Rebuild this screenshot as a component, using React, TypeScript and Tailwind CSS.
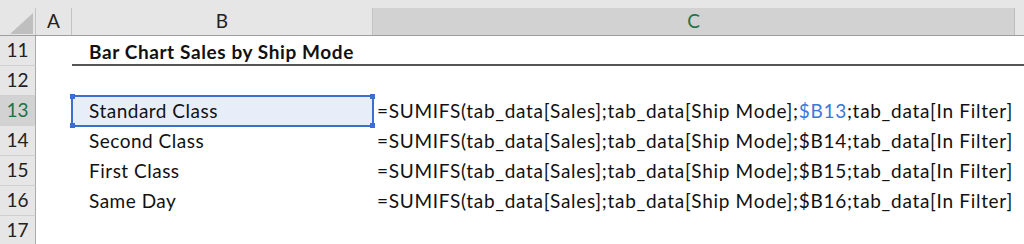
import React from 'react';

const ROWS = [
  { n: 11, b: 'Bar Chart Sales by Ship Mode', title: true },
  { n: 12, b: '' },
  { n: 13, b: 'Standard Class', ref: '$B13', active: true },
  { n: 14, b: 'Second Class', ref: '$B14' },
  { n: 15, b: 'First Class', ref: '$B15' },
  { n: 16, b: 'Same Day', ref: '$B16' },
  { n: 17, b: '' },
];

function Handle({ className }: { className: string }) {
  return <span className={`absolute w-[5px] h-[5px] bg-[#3a6fd2] ${className}`} />;
}

export default function App() {
  return (
    <div
      className="w-[1024px] h-[244px] overflow-hidden bg-white flex flex-col text-[19px] text-[#111]"
      style={{ fontFamily: 'Lato, "Open Sans", sans-serif' }}
    >
      {/* column headers */}
      <div className="flex items-end h-[36px] shrink-0 bg-[#e6e6e6] border-b border-[#9e9e9e]">
        <div className="w-[36px] h-[27px] shrink-0 border-r border-[#c4c4c4] flex items-end justify-end pr-[2px] pb-[1px]">
          <svg width="23" height="21" viewBox="0 0 23 21">
            <path d="M0 21 L23 0 L23 21 Z" fill="#bfbfbf" />
          </svg>
        </div>
        <div className="w-[36px] h-[27px] shrink-0 border-r border-[#c4c4c4] flex items-center justify-center text-[#222]">A</div>
        <div className="w-[301px] h-[27px] shrink-0 border-r border-[#c4c4c4] flex items-center justify-center text-[#222]">B</div>
        <div className="w-[642px] h-[27px] shrink-0 border-r border-[#bdbdbd] bg-[#d2d2d2] flex items-center justify-center text-[#217346]">C</div>
        <div className="flex-1 h-[27px]" />
      </div>

      {ROWS.map((r) => (
        <div key={r.n} className="flex h-[30px] shrink-0">
          <div
            className={`w-[36px] shrink-0 border-r border-b border-r-[#ababab] border-b-[#d0d0d0] flex items-center justify-center ${
              r.active ? 'bg-[#d2d2d2] text-[#217346]' : 'bg-[#e6e6e6] text-[#222]'
            }`}
          >
            {r.n}
          </div>
          <div className="w-[36px] shrink-0" />
          {r.title ? (
            <div className="flex-1 flex items-center pl-[17px] pt-[4px] font-bold tracking-[0.6px] border-b-2 border-[#555]">
              {r.b}
            </div>
          ) : (
            <>
              <div className="relative w-[301px] shrink-0 flex items-center pl-[17px] tracking-[0.5px]">
                {r.active && (
                  <div className="absolute -left-[1px] -top-[1px] -right-[1px] -bottom-[1px] border-2 border-[#3a6fd2] bg-[#e8eef9]">
                    <Handle className="-left-[3px] -top-[3px]" />
                    <Handle className="-right-[3px] -top-[3px]" />
                    <Handle className="-left-[3px] -bottom-[3px]" />
                    <Handle className="-right-[3px] -bottom-[3px]" />
                  </div>
                )}
                <span className="relative">{r.b}</span>
              </div>
              <div className="flex-1 flex items-center pl-[4px] whitespace-nowrap tracking-[0.7px]">
                {r.ref && (
                  <>
                    =SUMIFS(tab_data[Sales];tab_data[Ship Mode];
                    <span className={r.active ? 'text-[#3b78d8]' : ''}>{r.ref}</span>
                    ;tab_data[In Filter]
                  </>
                )}
              </div>
            </>
          )}
        </div>
      ))}
    </div>
  );
}
